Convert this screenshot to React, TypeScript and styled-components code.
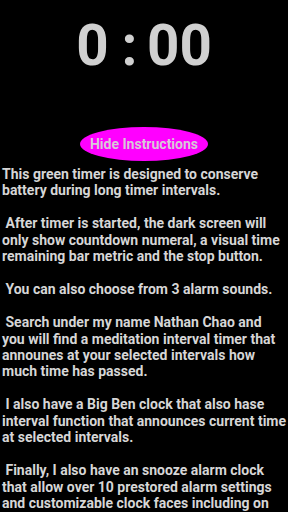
import React from "react";
import styled, { createGlobalStyle } from "styled-components";

const Global = createGlobalStyle`
  html, body { margin: 0; padding: 0; background: #000; }
  body { font-family: Roboto, "Noto Sans", sans-serif; overflow: hidden; }
`;

const Screen = styled.div`
  width: 288px;
  height: 512px;
  background: #000;
  display: flex;
  flex-direction: column;
  align-items: center;
  overflow: hidden;
`;

const Clock = styled.div`
  margin-top: 13px;
  display: flex;
  align-items: baseline;
  font-family: Roboto, sans-serif;
  font-size: 56.5px;
  font-weight: 700;
  color: #d0d0d0;
  line-height: 66px;
`;

const Digits = styled.span``;

const Colon = styled.span`
  margin: 0 9.5px 0 13px;
`;

const HideButton = styled.button`
  margin-top: 48px;
  width: 128px;
  height: 34px;
  flex-shrink: 0;
  border: none;
  border-radius: 50%;
  background: #ff00ff;
  color: #d8c8d8;
  font-family: Roboto, sans-serif;
  font-weight: 700;
  font-size: 14px;
  padding: 0;
  display: flex;
  align-items: center;
  justify-content: center;
`;

const Instructions = styled.div`
  align-self: stretch;
  margin-top: 5px;
  padding: 0 1.5px 0 2px;
  font-family: Roboto, sans-serif;
  font-weight: 700;
  font-size: 14px;
  line-height: 16.45px;
  color: #d6d6d6;
  white-space: pre-wrap;
`;

const text = `This green timer is designed to conserve battery during long timer intervals.

 After timer is started, the dark screen will only show countdown numeral, a visual time remaining bar metric and the stop button.

 You can also choose from 3 alarm sounds.

 Search under my name Nathan Chao and you will find a meditation interval timer that announes at your selected intervals how much time has passed.

 I also have a Big Ben clock that also hase interval function that announces current time at selected intervals.

 Finally, I also have an snooze alarm clock that allow over 10 prestored alarm settings and customizable clock faces including on black background.`;

export default function App() {
  return (
    <>
      <Global />
      <Screen>
        <Clock>
          <Digits>0</Digits>
          <Colon>:</Colon>
          <Digits>00</Digits>
        </Clock>
        <HideButton>Hide Instructions</HideButton>
        <Instructions>{text}</Instructions>
      </Screen>
    </>
  );
}
